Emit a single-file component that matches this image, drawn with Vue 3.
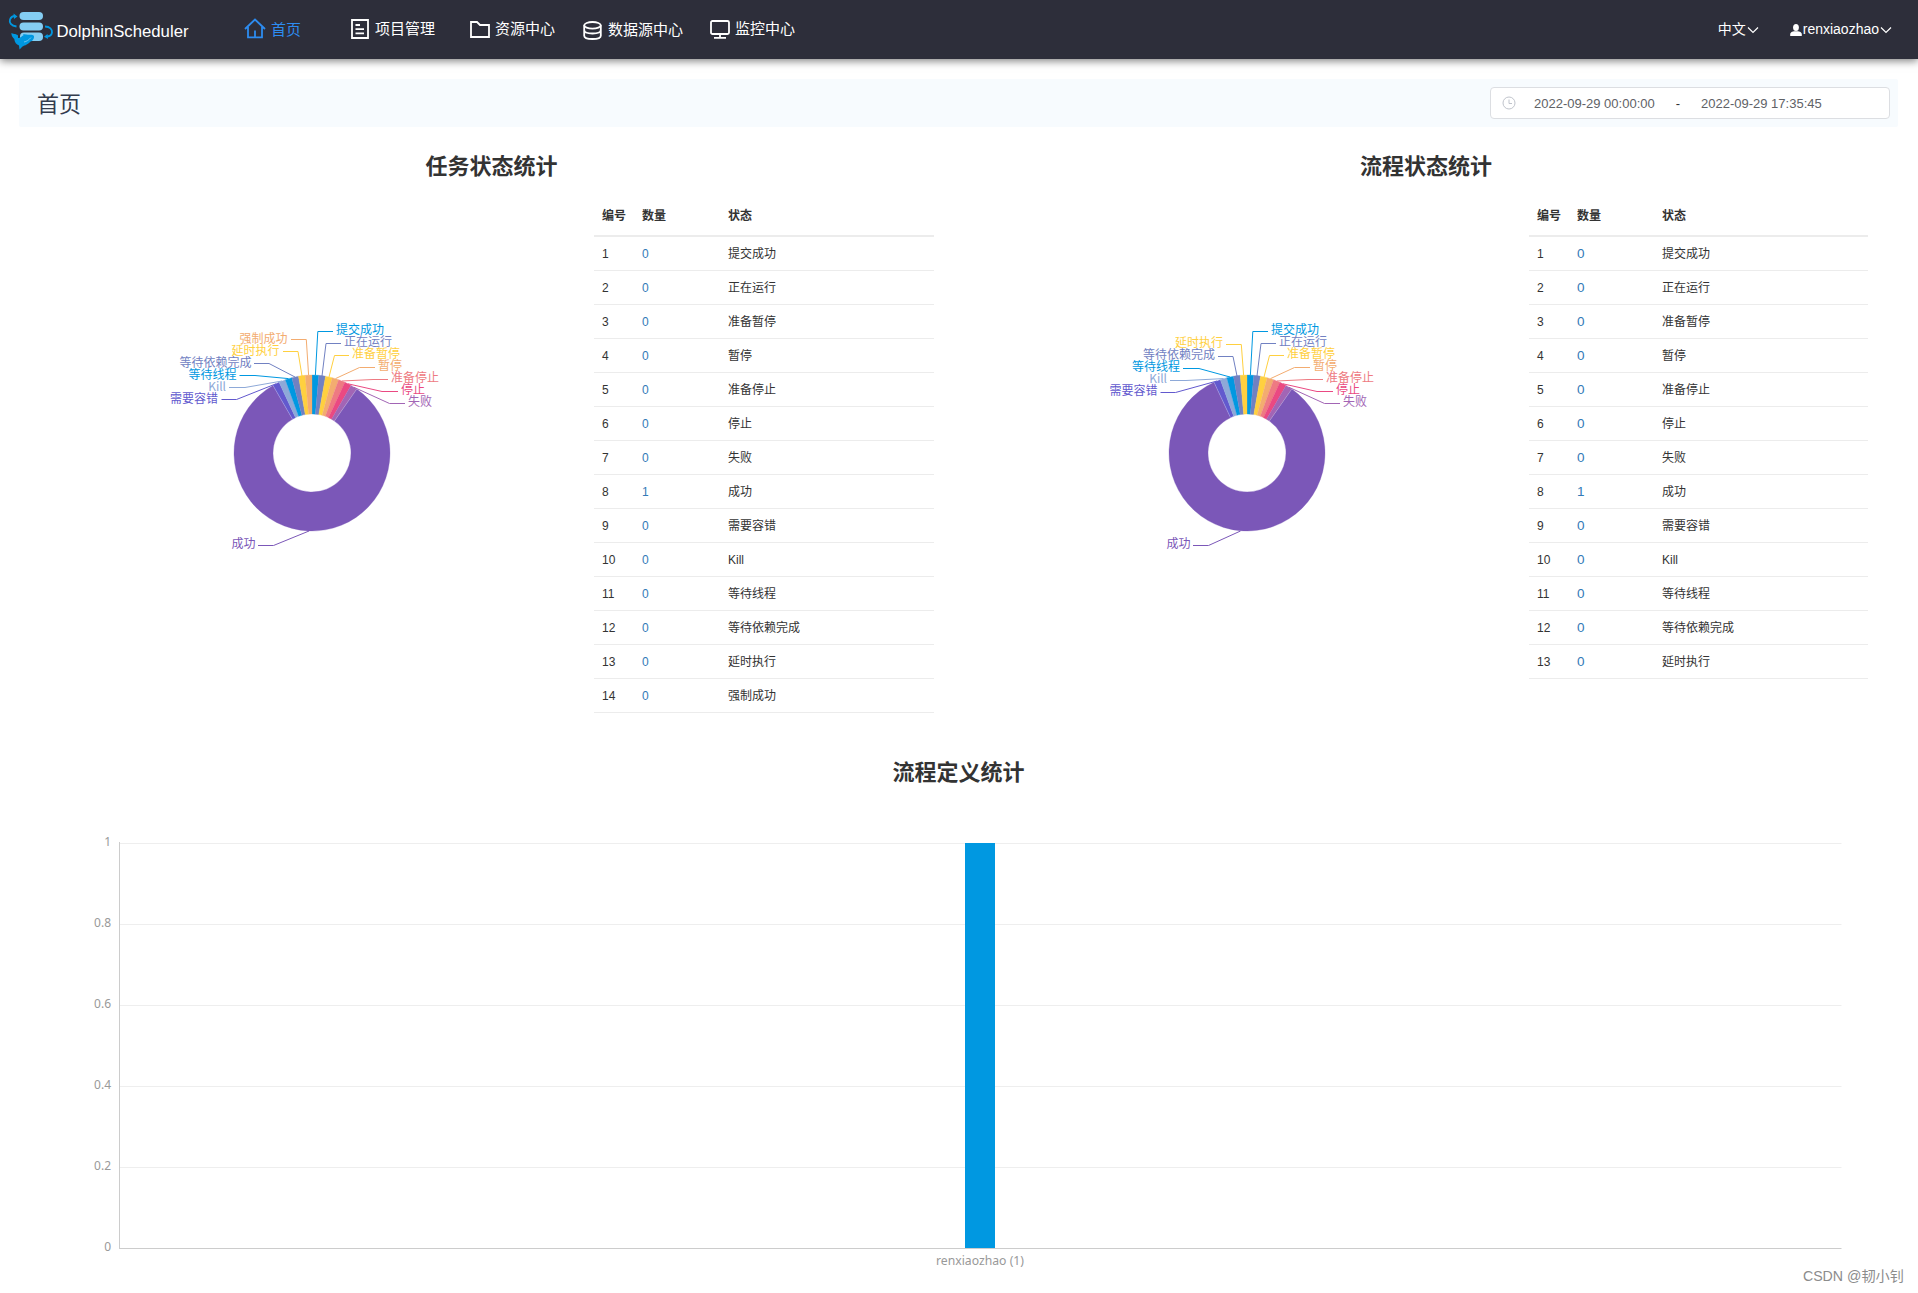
<template>
  <div class="home">
    <header class="nav">
      <svg class="logo" width="200" height="59" viewBox="0 0 200 59">
        <g fill="#84cdf2">
          <rect x="19.5" y="12" width="23.5" height="8" rx="4" />
          <rect x="19.5" y="22.5" width="23.5" height="8" rx="4" />
          <rect x="20" y="32.5" width="23" height="8.5" rx="4" />
        </g>
        <g fill="none" stroke="#0097e0" stroke-width="1.8">
          <path d="M16.5 26.5C11 26 9 22.5 10 19.5C10.8 17.3 12.5 16 15 16" />
          <path d="M45 26.5C50 26.5 52.3 29.5 52 32.5C51.6 35.2 50 36.5 46.5 36.5" />
        </g>
        <path d="M13.5 13.5L17.5 16.5L14 19Z" fill="#0097e0" />
        <path d="M47.5 34L44 36.8L48 39Z" fill="#0097e0" />
        <path
          d="M11.3 33C12.5 34 16 33.5 18 35.5L18 38C20.5 38.3 21.5 36.3 23.5 35.3L23 34.3C25 33.8 26.5 34.5 28 34.8C31 34.5 33.5 34.8 34 36C34.3 38.5 33 39.5 32 41L30.5 41.5C29 43.5 27 44.5 25.5 45.2C24 45.5 23.5 46 22.5 46.5L19.5 49.5L19 45.5C16.5 44.5 14.5 42.5 14.3 39C13 37.5 11.5 36.5 11.3 33Z"
          fill="#0097e0"
        />
        <path d="M24 42C26.5 41.5 29 40 31 37.5" fill="none" stroke="#84cdf2" stroke-width=".8" />
        <text x="56.5" y="36.5" textLength="132" lengthAdjust="spacingAndGlyphs">DolphinScheduler</text>
      </svg>

      <nav class="menu">
        <a class="menu-item active item-home">
          <svg width="22" height="22" viewBox="0 0 22 22">
            <path d="M1 11L11 1.5L21 11M4 9V19.3H18V9M11 19V12.5" />
          </svg>
          <span>首页</span>
        </a>
        <a class="menu-item item-project">
          <svg width="18" height="20" viewBox="0 0 18 20">
            <path d="M1 1H17V19H1ZM4.5 6H9M4.5 10.2H13M4.5 14.4H13" />
          </svg>
          <span>项目管理</span>
        </a>
        <a class="menu-item item-resource">
          <svg width="20" height="17" viewBox="0 0 20 17">
            <path d="M1 16V1H7L10 4H19V16Z" />
          </svg>
          <span>资源中心</span>
        </a>
        <a class="menu-item item-datasource">
          <svg width="19" height="19" viewBox="0 0 19 19">
            <ellipse cx="9.5" cy="4.3" rx="8.3" ry="3.3" />
            <path d="M1.2 4.3V14.7C1.2 16.8 5 18 9.5 18S17.8 16.8 17.8 14.7V4.3M1.2 9C1.2 11.5 5 12.5 9.5 12.5S17.8 11.5 17.8 9" />
          </svg>
          <span>数据源中心</span>
        </a>
        <a class="menu-item item-monitor">
          <svg width="20" height="19" viewBox="0 0 20 19">
            <rect x="1" y="1" width="18" height="13" rx="1.5" />
            <path d="M10 14V17.5M4 17.8H16" />
          </svg>
          <span>监控中心</span>
        </a>
      </nav>

      <div class="lang">
        <span>中文</span>
        <svg class="arrow" width="12" height="8" viewBox="0 0 12 8"><path d="M1 1.5L6 6.5L11 1.5" /></svg>
      </div>
      <div class="user">
        <svg class="avatar" width="12" height="12" viewBox="0 0 12 12">
          <ellipse cx="6" cy="3.5" rx="2.9" ry="3.5" />
          <path d="M0.2 12V10C0.2 8.3 2.5 7.5 4.2 7.2H7.8C9.5 7.5 11.8 8.3 11.8 10V12Z" />
        </svg>
        <span>renxiaozhao</span>
        <svg class="arrow" width="12" height="8" viewBox="0 0 12 8"><path d="M1 1.5L6 6.5L11 1.5" /></svg>
      </div>
    </header>

    <div class="title-bar">
      <h2>首页</h2>
      <div class="date-picker">
        <svg width="14" height="14" viewBox="0 0 14 14">
          <circle cx="7" cy="7" r="6" />
          <path d="M7 3.5V7.5H10" />
        </svg>
        <span class="date">2022-09-29 00:00:00</span>
        <span class="sep">-</span>
        <span class="date">2022-09-29 17:35:45</span>
      </div>
    </div>

    <div class="stats">
      <section v-for="panel in panels" :key="panel.title" class="panel">
        <h3>{{ panel.title }}</h3>
        <div class="panel-body">
          <svg class="pie" width="340" height="280" viewBox="-170 -160 340 280">
            <path v-for="s in panel.slices" :key="s.name" :d="s.path" :fill="s.color" :stroke="s.color" stroke-width=".3" />
            <path :d="panel.edges" stroke="#fff" stroke-opacity=".35" stroke-width=".7" />
            <g v-for="s in panel.slices" :key="s.name">
              <polyline :points="s.line" fill="none" :stroke="s.color" />
              <text :x="s.x" :y="s.y" :text-anchor="s.anchor" :fill="s.color">{{ s.name }}</text>
            </g>
          </svg>
          <table :class="{ large: panel.large }">
            <thead>
              <tr>
                <th class="col-no">编号</th>
                <th class="col-num">数量</th>
                <th>状态</th>
              </tr>
            </thead>
            <tbody>
              <tr v-for="(s, i) in panel.slices" :key="s.name">
                <td>{{ i + 1 }}</td>
                <td><a>{{ s.value }}</a></td>
                <td>{{ s.name }}</td>
              </tr>
            </tbody>
          </table>
        </div>
      </section>
    </div>

    <section class="define">
      <h3>流程定义统计</h3>
      <svg class="bar-chart" width="1918" height="460" viewBox="0 820 1918 460">
        <g v-for="(t, i) in ticks" :key="t">
          <path :d="`M119 ${843.5 + i * 81}H1841.5`" :stroke="i === 5 ? '#ccc' : '#eee'" />
          <text x="111" :y="845.5 + i * 81" text-anchor="end">{{ t }}</text>
        </g>
        <rect x="965" y="843" width="30" height="405" fill="#0098e1" />
        <path d="M119.5 842V1249" stroke="#ccc" />
        <text x="936" y="1265" textLength="88" lengthAdjust="spacingAndGlyphs">renxiaozhao (1)</text>
      </svg>
    </section>

    <div class="watermark">CSDN @韧小钊</div>
  </div>
</template>

<script setup>
const ticks = ['1', '0.8', '0.6', '0.4', '0.2', '0']

// name, color, leader line, label x, label y (origin is the centre of the ring)
const right = [
  ['提交成功', '#0098e1', '3.4,-78 5.8,-121.5 21,-121.5', 24, -119],
  ['正在运行', '#7181c2', '10,-77 14,-109.5 29,-109.5', 32, -107],
  ['准备暂停', '#ffd03f', '17,-76 22.5,-97.5 37,-97.5', 40, -95],
  ['暂停', '#f3ac70', '23.5,-74.4 47.5,-85.5 63,-85.5', 66, -83],
  ['准备停止', '#ee7a82', '30,-72 61,-73.5 76,-73.5', 79, -71],
  ['停止', '#ea4982', '36,-69.2 70,-61.5 86,-61.5', 89, -59],
  ['失败', '#a265b5', '42,-65.7 77.5,-49.5 93,-49.5', 96, -47]
]

const taskLeft = [
  ['成功', '#7b57b8', '-3,78 -38.5,92.5 -54,92.5', -56.5, 95],
  ['需要容错', '#6259ce', '-36,-69.2 -75.5,-53.5 -90.5,-53.5', -94, -50],
  ['Kill', '#8ea9d8', '-30,-72 -67,-65.5 -83,-65.5', -86, -62],
  ['等待线程', '#0098e1', '-23.5,-74.4 -57,-77.5 -72.5,-77.5', -75.5, -74],
  ['等待依赖完成', '#7181c2', '-17,-76 -43,-89.5 -58,-89.5', -60.5, -86],
  ['延时执行', '#ffd03f', '-10,-77 -14,-101.5 -29,-101.5', -32.5, -98],
  ['强制成功', '#f3ac70', '-3.4,-78 -5.7,-113.5 -21,-113.5', -24.5, -110]
]

const processLeft = [
  ['成功', '#7b57b8', '-6.5,78 -38.5,92.5 -54,92.5', -56.5, 95],
  ['需要容错', '#6259ce', '-30,-72 -71.5,-60.5 -86.5,-60.5', -89.5, -58],
  ['Kill', '#8ea9d8', '-23.5,-74.4 -61,-72.5 -77,-72.5', -80, -70],
  ['等待线程', '#0098e1', '-17,-76 -48,-84.5 -64,-84.5', -67, -82],
  ['等待依赖完成', '#7181c2', '-10,-77 -14,-96.5 -29,-96.5', -32, -94],
  ['延时执行', '#ffd03f', '-3.4,-78 -5.7,-108.5 -21,-108.5', -24, -106]
]

const point = (r, deg) => {
  const a = (deg * Math.PI) / 180
  return `${(r * Math.sin(a)).toFixed(2)} ${(-r * Math.cos(a)).toFixed(2)}`
}

// empty states still get a 5 degree slice
function buildSlices(left) {
  const rows = [...right, ...left]
  const rest = 360 - (rows.length - 1) * 5
  let start = 0
  return rows.map(([name, color, line, x, y], i) => {
    const sweep = name === '成功' ? rest : 5
    const end = start + sweep
    const big = sweep > 180 ? 1 : 0
    const path = `M${point(78, start)}A78 78 0 ${big} 1 ${point(78, end)}L${point(39, end)}A39 39 0 ${big} 0 ${point(39, start)}Z`
    start = end
    return {
      name, color, line, x, y, path,
      value: name === '成功' ? 1 : 0,
      anchor: i < right.length ? 'start' : 'end'
    }
  })
}

function buildEdges(left) {
  const a = 360 - (left.length - 1) * 5
  return [35, a].map(d => `M${point(39, d)}L${point(78, d)}`).join('')
}

const panels = [
  { title: '任务状态统计', slices: buildSlices(taskLeft), edges: buildEdges(taskLeft), large: false },
  { title: '流程状态统计', slices: buildSlices(processLeft), edges: buildEdges(processLeft), large: true }
]
</script>

<style>
body {
  margin: 0;
  background: #fff;
}
</style>

<style scoped>
.home {
  position: relative;
  width: 1918px;
  height: 1293px;
  overflow: hidden;
  background: #fff;
  color: #333;
  font-family: "Liberation Sans", "Noto Sans CJK SC", sans-serif;
  font-size: 12px;
}

.nav {
  display: flex;
  align-items: center;
  height: 59px;
  background: #2d2e3a;
  color: #fff;
  box-shadow: 0 2px 8px rgba(0, 0, 0, 0.5);
}

.logo {
  flex: none;
}

.logo text {
  fill: #fff;
  font-size: 17px;
}

.menu {
  display: flex;
  flex: 1;
  align-items: center;
  margin-left: 44px;
  font-size: 15px;
}

.menu-item {
  display: flex;
  align-items: center;
  height: 55px;
  padding-bottom: 1px;
  white-space: nowrap;
}

.menu-item span {
  padding-bottom: 4px;
}

.menu-item svg {
  fill: none;
  stroke: #fff;
  stroke-width: 1.8;
}

.menu-item.active {
  color: #2d8cf0;
}

.menu-item.active span {
  padding-bottom: 1px;
}

.menu-item.active svg {
  stroke: #2d8cf0;
}

.item-home {
  width: 107px;
  gap: 5px;
}

.item-project {
  width: 119px;
  gap: 6px;
}

.item-resource {
  width: 113px;
  gap: 5px;
}

.item-datasource {
  width: 127px;
  gap: 6px;
  padding-top: 2px;
}

.item-monitor {
  gap: 5px;
}

.lang,
.user {
  display: flex;
  align-items: center;
  height: 57px;
  font-size: 14px;
}

.lang span {
  padding-bottom: 3px;
}

.user span {
  padding-bottom: 2px;
}

.lang {
  margin-right: 31px;
}

.user {
  margin-right: 26px;
}

.arrow {
  margin-left: 1px;
  fill: none;
  stroke: #fff;
  stroke-width: 1.2;
}

.avatar {
  margin-right: 1px;
  fill: #fff;
}

.title-bar {
  display: flex;
  align-items: center;
  justify-content: space-between;
  height: 48px;
  margin: 20px 20px 0 19px;
  padding: 0 8px 0 18px;
  box-sizing: border-box;
  border-radius: 2px;
  background: #f7fbfe;
}

.title-bar h2 {
  margin: 0;
  padding-bottom: 2px;
  color: #333c4e;
  font-size: 22px;
  font-weight: 400;
}

.date-picker {
  display: flex;
  align-items: center;
  width: 400px;
  height: 32px;
  box-sizing: border-box;
  padding-left: 11px;
  border: 1px solid #dcdee2;
  border-radius: 4px;
  background: #fff;
  color: #606266;
  font-size: 13px;
}

.date-picker svg {
  margin-right: 18px;
  fill: none;
  stroke: #c0c4cc;
}

.date {
  width: 121px;
  white-space: nowrap;
}

.sep {
  width: 46px;
  text-align: center;
  color: #303133;
}

.stats {
  display: grid;
  grid-template-columns: 885px 884px;
  gap: 50px;
  height: 617px;
  padding-left: 49px;
}

h3 {
  margin: 0;
  color: #333;
  font-size: 22px;
  font-weight: 700;
  line-height: 32px;
  text-align: center;
}

.panel h3 {
  padding-top: 24px;
}

.panel-body {
  display: flex;
  align-items: flex-start;
  padding: 13px 0 0 93px;
}

.pie {
  flex: none;
  margin: 97px 112px 0 0;
}

.pie text {
  font-size: 12px;
  font-family: "Noto Sans CJK SC", sans-serif;
}

table {
  flex: 1;
  table-layout: fixed;
  border-collapse: separate;
  border-spacing: 0;
}

th,
td {
  height: 33px;
  padding: 0 0 0 8px;
  border-bottom: 1px solid #ececec;
  text-align: left;
  line-height: 18px;
}

th {
  height: 39px;
  border-bottom-width: 2px;
}

.col-no {
  width: 32px;
}

.col-num {
  width: 78px;
}

.large .col-num {
  width: 77px;
}

td a {
  color: #337ab7;
}

.large td a {
  font-size: 13.5px;
}

.define h3 {
  padding: 13px 1px 0 0;
}

.bar-chart {
  display: block;
  margin-top: 31px;
}

.bar-chart text {
  fill: #999;
  font-family: "Noto Sans", sans-serif;
  font-size: 12px;
}

.watermark {
  position: absolute;
  right: 14px;
  bottom: 7px;
  color: #8c8c8c;
  font-size: 14.2px;
  line-height: 20px;
  white-space: nowrap;
}
</style>
